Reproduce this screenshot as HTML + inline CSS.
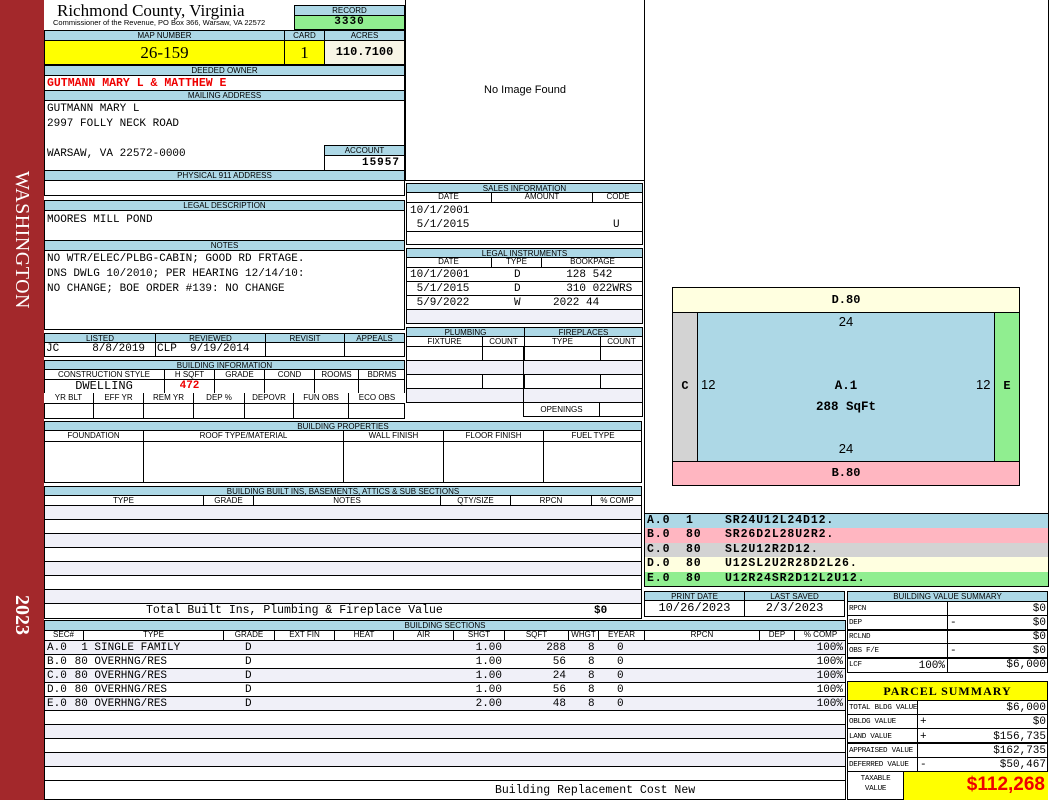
<!DOCTYPE html>
<html><head><meta charset="utf-8"><style>
*{box-sizing:border-box;margin:0;padding:0}
body{width:1050px;height:800px;background:#fff;position:relative;overflow:hidden;font-family:"Liberation Sans",sans-serif}
div{position:absolute}
.b{border:1px solid #000;background:#fff}
.h{background:#add8e6;border:1px solid #000;font-size:8px;text-align:center;line-height:9px;color:#000;white-space:nowrap;overflow:hidden}
.m{font-family:"Liberation Mono",monospace;font-size:11px;white-space:nowrap}
.row{display:flex}
.row>span{border-right:1px solid #000;display:block;height:100%;text-align:center;overflow:hidden;white-space:nowrap}
.row>span:last-child{border-right:none}
.lb{font-family:"Liberation Mono",monospace;font-size:7.6px;letter-spacing:-0.3px;white-space:nowrap}
</style></head><body>
<!-- sidebar -->
<div style="left:0;top:0;width:44px;height:800px;background:#a3282b"></div>
<div style="left:6px;top:155px;width:32px;height:170px;"><div style="left:32px;top:0;width:170px;height:32px;transform-origin:0 0;transform:rotate(90deg);color:#fff;font-family:'Liberation Serif',serif;font-size:20px;line-height:32px;text-align:center;letter-spacing:0.5px">WASHINGTON</div></div>
<div style="left:6px;top:590px;width:32px;height:50px;"><div style="left:32px;top:0;width:50px;height:32px;transform-origin:0 0;transform:rotate(90deg);color:#fff;font-family:'Liberation Serif',serif;font-size:20px;font-weight:bold;line-height:32px;text-align:center">2023</div></div>

<!-- title -->
<div style="left:57px;top:2px;font-family:'Liberation Serif',serif;font-size:17px;line-height:18px;white-space:nowrap">Richmond County, Virginia</div>
<div style="left:53px;top:19px;font-size:7.5px;white-space:nowrap;line-height:8px">Commissioner of the Revenue, PO Box 366, Warsaw, VA 22572</div>
<div class="h" style="left:294px;top:5px;width:111px;height:11px">RECORD</div>
<div class="b m" style="left:294px;top:15px;width:111px;height:15px;background:#90ee90;text-align:center;font-weight:bold;line-height:13px;letter-spacing:1px">3330</div>

<!-- map number -->
<div class="h row" style="left:44px;top:30px;width:361px;height:11px;padding:0"><span style="width:240px">MAP NUMBER</span><span style="width:40px">CARD</span><span style="flex:1">ACRES</span></div>
<div class="b row" style="left:44px;top:40px;width:361px;height:25px;font-family:'Liberation Serif',serif;font-size:17px;line-height:23px"><span style="width:240px;background:#ffff00">26-159</span><span style="width:40px;background:#ffff00">1</span><span style="flex:1;background:#f7f5e6;font-family:'Liberation Mono',monospace;font-weight:bold;font-size:12px">110.7100</span></div>

<!-- owner -->
<div class="h" style="left:44px;top:65px;width:361px;height:11px">DEEDED OWNER</div>
<div class="b m" style="left:44px;top:75px;width:361px;height:16px;color:#e00;font-weight:bold;font-size:11.5px;line-height:15px;padding-left:2px">GUTMANN MARY L &amp; MATTHEW E</div>
<div class="h" style="left:44px;top:90px;width:361px;height:11px">MAILING ADDRESS</div>
<div class="b" style="left:44px;top:100px;width:361px;height:71px"></div>
<div class="m" style="left:47px;top:102px;line-height:15px">GUTMANN MARY L<br>2997 FOLLY NECK ROAD<br><br>WARSAW, VA 22572-0000</div>
<div class="h" style="left:324px;top:145px;width:81px;height:11px">ACCOUNT</div>
<div class="b m" style="left:324px;top:155px;width:81px;height:16px;font-weight:bold;text-align:right;padding-right:4px;line-height:14px;letter-spacing:1px">15957</div>
<div class="h" style="left:44px;top:170px;width:361px;height:11px">PHYSICAL 911 ADDRESS</div>
<div class="b" style="left:44px;top:180px;width:361px;height:16px"></div>

<div class="h" style="left:44px;top:200px;width:361px;height:11px">LEGAL DESCRIPTION</div>
<div class="b m" style="left:44px;top:210px;width:361px;height:31px;padding:2px 2px;line-height:14px">MOORES MILL POND</div>
<div class="h" style="left:44px;top:240px;width:361px;height:11px">NOTES</div>
<div class="b m" style="left:44px;top:250px;width:361px;height:80px;padding:1px 2px;line-height:15px">NO WTR/ELEC/PLBG-CABIN; GOOD RD FRTAGE.<br>DNS DWLG 10/2010; PER HEARING 12/14/10:<br>NO CHANGE; BOE ORDER #139: NO CHANGE</div>

<!-- listed -->
<div class="h row" style="left:44px;top:333px;width:361px;height:10px"><span style="width:111px">LISTED</span><span style="width:110px">REVIEWED</span><span style="width:79px">REVISIT</span><span style="flex:1">APPEALS</span></div>
<div class="b row m" style="left:44px;top:342px;width:361px;height:15px;line-height:13px"><span style="width:111px;text-align:left;padding-left:1px">JC&nbsp;&nbsp;&nbsp;&nbsp;&nbsp;8/8/2019</span><span style="width:110px;text-align:left;padding-left:1px">CLP&nbsp;&nbsp;9/19/2014</span><span style="width:79px"></span><span style="flex:1"></span></div>

<!-- building info -->
<div class="h" style="left:44px;top:360px;width:361px;height:10px">BUILDING INFORMATION</div>
<div class="b" style="left:44px;top:369px;width:361px;height:50px"></div>
<div class="row" style="left:44px;top:369px;width:361px;height:11px;font-size:8px;line-height:11px;border-bottom:1px solid #000"><span style="width:121px">CONSTRUCTION STYLE</span><span style="width:50px">H SQFT</span><span style="width:50px">GRADE</span><span style="width:50px">COND</span><span style="width:44px">ROOMS</span><span style="flex:1">BDRMS</span></div>
<div class="row m" style="left:44px;top:380px;width:361px;height:14px;line-height:13px;border-bottom:1px solid #000"><span style="width:121px;font-size:12px">DWELLING</span><span style="width:50px;color:#e00;font-weight:bold">472</span><span style="width:50px"></span><span style="width:50px"></span><span style="width:44px"></span><span style="flex:1"></span></div>
<div class="row" style="left:44px;top:393px;width:361px;height:11px;font-size:8px;line-height:10px;border-bottom:1px solid #000;background:#fff"><span style="width:50px">YR BLT</span><span style="width:50px">EFF YR</span><span style="width:50px">REM YR</span><span style="width:51px">DEP %</span><span style="width:49px">DEPOVR</span><span style="width:55px">FUN OBS</span><span style="flex:1">ECO OBS</span></div>
<div class="row" style="left:44px;top:404px;width:361px;height:14px"><span style="width:50px"></span><span style="width:50px"></span><span style="width:50px"></span><span style="width:51px"></span><span style="width:49px"></span><span style="width:55px"></span><span style="flex:1"></span></div>

<!-- building properties -->
<div class="h" style="left:44px;top:421px;width:598px;height:10px">BUILDING PROPERTIES</div>
<div class="b" style="left:44px;top:430px;width:598px;height:53px"></div>
<div class="row" style="left:44px;top:430px;width:598px;height:53px;font-size:8px;line-height:11px"><span style="width:100px">FOUNDATION</span><span style="width:200px">ROOF TYPE/MATERIAL</span><span style="width:100px">WALL FINISH</span><span style="width:100px">FLOOR FINISH</span><span style="flex:1">FUEL TYPE</span></div>
<div style="left:44px;top:441px;width:598px;height:1px;background:#000"></div>

<!-- built ins -->
<div class="h" style="left:44px;top:486px;width:598px;height:10px">BUILDING BUILT INS, BASEMENTS, ATTICS &amp; SUB SECTIONS</div>
<div class="b" style="left:44px;top:495px;width:598px;height:124px"></div>
<div class="row" style="left:44px;top:495px;width:598px;height:11px;font-size:8px;line-height:11px;border-bottom:1px solid #000"><span style="width:160px">TYPE</span><span style="width:50px">GRADE</span><span style="width:187px">NOTES</span><span style="width:70px">QTY/SIZE</span><span style="width:81px">RPCN</span><span style="flex:1">% COMP</span></div>
<div style="left:45px;top:506px;width:596px;height:14px;background:#f0f0f8;border-bottom:1px solid #000"></div>
<div style="left:45px;top:520px;width:596px;height:14px;border-bottom:1px solid #000"></div>
<div style="left:45px;top:534px;width:596px;height:14px;background:#f0f0f8;border-bottom:1px solid #000"></div>
<div style="left:45px;top:548px;width:596px;height:14px;border-bottom:1px solid #000"></div>
<div style="left:45px;top:562px;width:596px;height:14px;background:#f0f0f8;border-bottom:1px solid #000"></div>
<div style="left:45px;top:576px;width:596px;height:14px;border-bottom:1px solid #000"></div>
<div style="left:45px;top:590px;width:596px;height:14px;background:#f0f0f8;border-bottom:1px solid #000"></div>
<div class="m" style="left:146px;top:604px;line-height:14px;font-size:11.5px">Total Built Ins, Plumbing &amp; Fireplace Value</div>
<div class="m" style="left:594px;top:604px;line-height:14px;font-weight:bold">$0</div>

<!-- building sections -->
<div class="h" style="left:44px;top:620px;width:802px;height:11px">BUILDING SECTIONS</div>
<div class="b" style="left:44px;top:630px;width:802px;height:170px"></div>
<div class="row" style="left:44px;top:630px;width:802px;height:11px;font-size:8px;line-height:10px;border-bottom:1px solid #000"><span style="width:40px">SEC#</span><span style="width:140px">TYPE</span><span style="width:51px">GRADE</span><span style="width:60px">EXT FIN</span><span style="width:59px">HEAT</span><span style="width:60px">AIR</span><span style="width:51px">SHGT</span><span style="width:64px">SQFT</span><span style="width:30px">WHGT</span><span style="width:46px">EYEAR</span><span style="width:115px">RPCN</span><span style="width:35px">DEP</span><span style="flex:1">% COMP</span></div>
<div style="left:45px;top:641px;width:800px;height:14px;background:#f0f0f8;border-bottom:1px solid #000"></div>
<div style="left:45px;top:655px;width:800px;height:14px;border-bottom:1px solid #000"></div>
<div style="left:45px;top:669px;width:800px;height:14px;background:#f0f0f8;border-bottom:1px solid #000"></div>
<div style="left:45px;top:683px;width:800px;height:14px;border-bottom:1px solid #000"></div>
<div style="left:45px;top:697px;width:800px;height:14px;background:#f0f0f8;border-bottom:1px solid #000"></div>
<div style="left:45px;top:711px;width:800px;height:14px;border-bottom:1px solid #000"></div>
<div style="left:45px;top:725px;width:800px;height:14px;background:#f0f0f8;border-bottom:1px solid #000"></div>
<div style="left:45px;top:739px;width:800px;height:14px;border-bottom:1px solid #000"></div>
<div style="left:45px;top:753px;width:800px;height:14px;background:#f0f0f8;border-bottom:1px solid #000"></div>
<div style="left:45px;top:767px;width:800px;height:14px;border-bottom:1px solid #000"></div>
<div class="m" style="left:47px;top:641px;line-height:14px">A.0<br>B.0<br>C.0<br>D.0<br>E.0</div>
<div class="m" style="left:68px;top:641px;line-height:14px">&nbsp;&nbsp;1 SINGLE FAMILY<br>&nbsp;80 OVERHNG/RES<br>&nbsp;80 OVERHNG/RES<br>&nbsp;80 OVERHNG/RES<br>&nbsp;80 OVERHNG/RES</div>
<div class="m" style="left:245px;top:641px;line-height:14px">D<br>D<br>D<br>D<br>D</div>
<div class="m" style="left:454px;top:641px;width:48px;text-align:right;line-height:14px">1.00<br>1.00<br>1.00<br>1.00<br>2.00</div>
<div class="m" style="left:520px;top:641px;width:46px;text-align:right;line-height:14px">288<br>56<br>24<br>56<br>48</div>
<div class="m" style="left:588px;top:641px;line-height:14px">8<br>8<br>8<br>8<br>8</div>
<div class="m" style="left:617px;top:641px;line-height:14px">0<br>0<br>0<br>0<br>0</div>
<div class="m" style="left:800px;top:641px;width:43px;text-align:right;line-height:14px">100%<br>100%<br>100%<br>100%<br>100%</div>
<div class="m" style="left:495px;top:784px;line-height:14px;font-size:11.5px">Building Replacement Cost New</div>

<!-- image area -->
<div class="b" style="left:405px;top:0;width:240px;height:181px;border-top:none"></div>
<div style="left:405px;top:84px;width:240px;text-align:center;font-size:11px">No Image Found</div>

<!-- sales -->
<div class="h" style="left:406px;top:183px;width:237px;height:10px">SALES INFORMATION</div>
<div class="b" style="left:406px;top:192px;width:237px;height:53px"></div>
<div class="row" style="left:406px;top:192px;width:237px;height:11px;font-size:8px;line-height:10px;border-bottom:1px solid #000"><span style="width:86px">DATE</span><span style="width:101px">AMOUNT</span><span style="flex:1">CODE</span></div>
<div class="m" style="left:410px;top:204px;line-height:14px">10/1/2001<br>&nbsp;5/1/2015</div>
<div class="m" style="left:613px;top:218px;line-height:14px">U</div>
<div style="left:407px;top:231px;width:235px;height:1px;background:#000"></div>

<div class="h" style="left:406px;top:248px;width:237px;height:10px">LEGAL INSTRUMENTS</div>
<div class="b" style="left:406px;top:257px;width:237px;height:67px"></div>
<div class="row" style="left:406px;top:257px;width:237px;height:11px;font-size:8px;line-height:10px;border-bottom:1px solid #000"><span style="width:86px">DATE</span><span style="width:50px">TYPE</span><span style="flex:1">BOOKPAGE</span></div>
<div style="left:407px;top:268px;width:235px;height:14px;border-bottom:1px solid #000"></div>
<div style="left:407px;top:282px;width:235px;height:14px;border-bottom:1px solid #000"></div>
<div style="left:407px;top:296px;width:235px;height:14px;border-bottom:1px solid #000"></div>
<div style="left:407px;top:310px;width:235px;height:13px;background:#f0f0f8"></div>
<div class="m" style="left:410px;top:268px;line-height:14px">10/1/2001<br>&nbsp;5/1/2015<br>&nbsp;5/9/2022</div>
<div class="m" style="left:514px;top:268px;line-height:14px">D<br>D<br>W</div>
<div class="m" style="left:553px;top:268px;line-height:14px">&nbsp;&nbsp;128 542<br>&nbsp;&nbsp;310 022WRS<br>2022 44</div>

<!-- plumbing -->
<div class="h row" style="left:406px;top:327px;width:237px;height:10px"><span style="width:118px">PLUMBING</span><span style="flex:1">FIREPLACES</span></div>
<div class="b row" style="left:406px;top:336px;width:237px;height:67px;font-size:8px;line-height:10px"><span style="width:76px">FIXTURE</span><span style="width:42px">COUNT</span><span style="width:76px">TYPE</span><span style="flex:1">COUNT</span></div>
<div style="left:407px;top:346px;width:235px;height:1px;background:#000"></div>
<div style="left:407px;top:347px;width:235px;height:14px;border-bottom:1px solid #000"></div>
<div style="left:407px;top:361px;width:235px;height:14px;background:#f0f0f8;border-bottom:1px solid #000"></div>
<div style="left:407px;top:375px;width:235px;height:14px;border-bottom:1px solid #000"></div>
<div style="left:407px;top:389px;width:235px;height:13px;background:#f0f0f8"></div>
<div style="left:523px;top:347px;width:1px;height:56px;background:#000"></div>
<div class="b row" style="left:523px;top:402px;width:120px;height:15px;font-size:8px;line-height:13px"><span style="width:76px">OPENINGS</span><span style="flex:1"></span></div>

<!-- sketch area -->
<div class="b" style="left:644px;top:0;width:405px;height:514px;border-top:none"></div>
<div style="left:672px;top:287px;width:348px;height:26px;background:#ffffe0;border:1px solid #000;text-align:center;font-family:'Liberation Mono',monospace;font-weight:bold;font-size:12px;line-height:24px">D.80</div>
<div style="left:672px;top:312px;width:26px;height:150px;background:#d3d3d3;border:1px solid #000;font-family:'Liberation Mono',monospace;font-weight:bold;font-size:12px;line-height:146px;text-align:center">C</div>
<div style="left:994px;top:312px;width:26px;height:150px;background:#90ee90;border:1px solid #000;font-family:'Liberation Mono',monospace;font-weight:bold;font-size:12px;line-height:146px;text-align:center">E</div>
<div style="left:697px;top:312px;width:298px;height:150px;background:#add8e6;border:1px solid #000"></div>
<div style="left:697px;top:314px;width:298px;text-align:center;font-size:13px">24</div>
<div style="left:697px;top:441px;width:298px;text-align:center;font-size:13px">24</div>
<div style="left:701px;top:377px;font-size:13px">12</div>
<div style="left:976px;top:377px;font-size:13px">12</div>
<div style="left:697px;top:376px;width:298px;text-align:center;font-family:'Liberation Mono',monospace;font-weight:bold;font-size:12.5px;line-height:21px">A.1<br>288 SqFt</div>
<div style="left:672px;top:461px;width:348px;height:25px;background:#ffb6c1;border:1px solid #000;text-align:center;font-family:'Liberation Mono',monospace;font-weight:bold;font-size:12px;line-height:22px">B.80</div>

<!-- sketch codes -->
<div class="m" style="left:644px;top:513px;width:405px;height:74px;border:1px solid #000;font-weight:bold;font-size:11.5px;line-height:14.4px;letter-spacing:0.9px">
<div style="position:relative;background:#add8e6;padding-left:2px">A.0&nbsp;&nbsp;1&nbsp;&nbsp;&nbsp;&nbsp;SR24U12L24D12.</div>
<div style="position:relative;background:#ffb6c1;padding-left:2px">B.0&nbsp;&nbsp;80&nbsp;&nbsp;&nbsp;SR26D2L28U2R2.</div>
<div style="position:relative;background:#d3d3d3;padding-left:2px">C.0&nbsp;&nbsp;80&nbsp;&nbsp;&nbsp;SL2U12R2D12.</div>
<div style="position:relative;background:#ffffe0;padding-left:2px">D.0&nbsp;&nbsp;80&nbsp;&nbsp;&nbsp;U12SL2U2R28D2L26.</div>
<div style="position:relative;background:#90ee90;padding-left:2px">E.0&nbsp;&nbsp;80&nbsp;&nbsp;&nbsp;U12R24SR2D12L2U12.</div>
</div>

<!-- print date -->
<div class="h row" style="left:644px;top:591px;width:201px;height:10px"><span style="width:100px">PRINT DATE</span><span style="flex:1">LAST SAVED</span></div>
<div class="b row m" style="left:644px;top:600px;width:201px;height:17px;line-height:15px;font-size:12px"><span style="width:100px">10/26/2023</span><span style="flex:1">2/3/2023</span></div>

<!-- building value summary -->
<div class="h" style="left:847px;top:591px;width:201px;height:11px">BUILDING VALUE SUMMARY</div>
<div class="b" style="left:847px;top:601px;width:201px;height:72px"></div>
<div style="left:947px;top:601px;width:1px;height:72px;background:#000"></div>
<div style="left:848px;top:615px;width:199px;height:1px;background:#000"></div>
<div style="left:848px;top:629px;width:199px;height:2px;background:#000"></div>
<div style="left:848px;top:643px;width:199px;height:1px;background:#000"></div>
<div style="left:848px;top:657px;width:199px;height:2px;background:#000"></div>
<div class="lb" style="left:849px;top:602px;line-height:14px">RPCN<br>DEP<br>RCLND<br>OBS F/E<br>LCF</div>
<div class="m" style="left:900px;top:659px;width:45px;text-align:right;line-height:14px">100%</div>
<div class="m" style="left:950px;top:602px;line-height:14px">&nbsp;<br>-<br>&nbsp;<br>-</div>
<div class="m" style="left:950px;top:602px;width:96px;text-align:right;line-height:14px">$0<br>$0<br>$0<br>$0<br>$6,000</div>

<!-- parcel summary -->
<div class="b" style="left:847px;top:681px;width:201px;height:20px;background:#ffff00;text-align:center;font-family:'Liberation Serif',serif;font-weight:bold;font-size:12px;line-height:18px;letter-spacing:1px">PARCEL SUMMARY</div>
<div class="b" style="left:847px;top:700px;width:201px;height:100px"></div>
<div style="left:917px;top:700px;width:1px;height:72px;background:#000"></div>
<div style="left:848px;top:714px;width:199px;height:1px;background:#000"></div>
<div style="left:848px;top:728px;width:199px;height:1px;background:#000"></div>
<div style="left:848px;top:742px;width:199px;height:2px;background:#000"></div>
<div style="left:848px;top:757px;width:199px;height:1px;background:#000"></div>
<div style="left:848px;top:771px;width:199px;height:1px;background:#000"></div>
<div class="lb" style="left:849px;top:701px;line-height:14.3px">TOTAL BLDG VALUE<br>OBLDG VALUE<br>LAND VALUE<br>APPRAISED VALUE<br>DEFERRED VALUE</div>
<div class="m" style="left:920px;top:701px;line-height:14.3px">&nbsp;<br>+<br>+<br>&nbsp;<br>-</div>
<div class="m" style="left:920px;top:701px;width:126px;text-align:right;line-height:14.3px">$6,000<br>$0<br>$156,735<br>$162,735<br>$50,467</div>
<div class="lb" style="left:848px;top:774px;width:55px;text-align:center;line-height:10px">TAXABLE<br>VALUE</div>
<div style="left:903px;top:772px;width:145px;height:28px;background:#ffff00;border-left:1px solid #000;color:#e00;font-weight:bold;font-size:19px;text-align:right;padding-right:3px;line-height:26px">$112,268</div>
</body></html>
